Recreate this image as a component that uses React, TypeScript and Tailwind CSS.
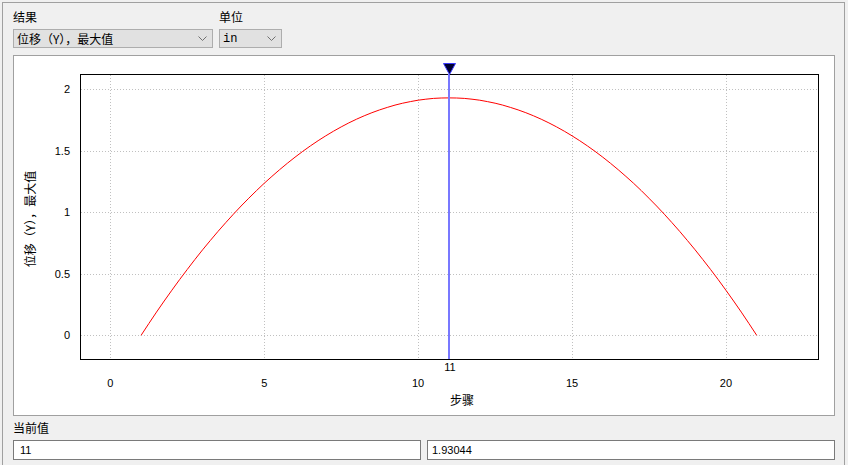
import React from 'react';

const X0 = 110.3;
const XS = 30.78;
const Y0 = 335.3;
const YS = 123;

const px = (v: number) => X0 + v * XS;
const py = (v: number) => Y0 - v * YS;
const snap = (n: number) => Math.round(n) + 0.5;

const PEAK = 1.93044;

const curvePoints = (() => {
  const pts: string[] = [];
  for (let s = 1; s <= 21.0001; s += 0.25) {
    const t = (s - 11) / 10;
    const v = PEAK * (1 - t * t);
    pts.push(`${px(s).toFixed(1)},${py(v).toFixed(1)}`);
  }
  return pts.join(' ');
})();

const Chevron = () => (
  <svg width="9" height="6" viewBox="0 0 9 6" className="shrink-0">
    <polyline points="0.5,0.5 4.5,4.5 8.5,0.5" fill="none" stroke="#707070" strokeWidth="1" />
  </svg>
);

const Dropdown: React.FC<{ value: string; width: string; mono?: boolean }> = ({ value, width, mono }) => (
  <div
    className={`flex h-[19px] items-center justify-between border border-[#adadad] bg-[#e1e1e1] pl-[3px] pr-[5px] text-[12px] leading-none text-black ${width}`}
  >
    <span className={mono ? "font-['Liberation_Mono','Noto_Sans_CJK_SC',monospace]" : ''}>{value}</span>
    <Chevron />
  </div>
);

const Chart = () => {
  const xTicks = [0, 5, 10, 15, 20];
  const yTicks = [
    { v: 0, l: '0' },
    { v: 0.5, l: '0.5' },
    { v: 1, l: '1' },
    { v: 1.5, l: '1.5' },
    { v: 2, l: '2' },
  ];
  return (
    <svg width="820" height="359" viewBox="14 56 820 359" className="block">
      {xTicks.map((t) => (
        <line
          key={`gx${t}`}
          x1={snap(px(t))}
          x2={snap(px(t))}
          y1={75}
          y2={359}
          stroke="#c0c0c0"
          strokeDasharray="1 2"
        />
      ))}
      {yTicks.map((t) => (
        <line
          key={`gy${t.v}`}
          x1={81}
          x2={818}
          y1={snap(py(t.v))}
          y2={snap(py(t.v))}
          stroke="#c0c0c0"
          strokeDasharray="1 2"
        />
      ))}
      <rect x="80.5" y="74.5" width="738" height="285" fill="none" stroke="#000" strokeWidth="1" />
      <polyline points={curvePoints} fill="none" stroke="#ff0000" strokeWidth="1" />
      <line x1={449} x2={449} y1={74} y2={359} stroke="#7878ff" strokeWidth="2" />
      <polygon points="443.5,63.5 455.5,63.5 449.5,74.5" fill="#000030" stroke="#3a3aff" strokeWidth="1" />
      {yTicks.map((t) => (
        <text
          key={`ly${t.v}`}
          x={70}
          y={py(t.v) + 4}
          textAnchor="end"
          fontSize="11"
          fontFamily="'Liberation Sans', sans-serif"
          fill="#000"
        >
          {t.l}
        </text>
      ))}
      {xTicks.map((t) => (
        <text
          key={`lx${t}`}
          x={px(t)}
          y={387}
          textAnchor="middle"
          fontSize="11"
          fontFamily="'Liberation Sans', sans-serif"
          fill="#000"
        >
          {t}
        </text>
      ))}
      <text x={450} y={371} textAnchor="middle" fontSize="11" fontFamily="'Liberation Sans', sans-serif" fill="#000">
        11
      </text>
      <text x={462} y={405} textAnchor="middle" fontSize="12" fontFamily="'Noto Sans CJK SC', sans-serif" fill="#000">
        步骤
      </text>
      <text
        x={0}
        y={0}
        transform="translate(35 219) rotate(-90)"
        textAnchor="middle"
        fontSize="12"
        fontFamily="'Noto Sans CJK SC', sans-serif"
        fill="#000"
      >
        位移（Y），最大值
      </text>
    </svg>
  );
};

export default function App() {
  return (
    <div className="h-[465px] w-[848px] overflow-hidden bg-[#f0f0f0] pl-[2px] pt-[2px] font-['Noto_Sans_CJK_SC',sans-serif] text-black">
      <div className="h-[470px] w-[843px] border-l border-r border-t border-[#a0a0a0] pl-[10px] pr-[9px] pt-[6px]">
        <div className="flex gap-[6px]">
          <div className="flex w-[200px] flex-col gap-[4px]">
            <span className="h-[16px] text-[12px] leading-[16px]">结果</span>
            <Dropdown value="位移（Y），最大值" width="w-[200px]" />
          </div>
          <div className="flex w-[63px] flex-col gap-[4px]">
            <span className="h-[16px] text-[12px] leading-[16px]">单位</span>
            <Dropdown value="in" width="w-[63px]" mono />
          </div>
        </div>
        <div className="mt-[7px] h-[361px] w-[822px] border border-[#a0a0a0] bg-white">
          <Chart />
        </div>
        <div className="mt-[4px] h-[16px] text-[12px] leading-[16px]">当前值</div>
        <div className="mt-[4px] flex gap-[6px]">
          <div className="flex h-[20px] w-[408px] items-center border border-[#7a7a7a] bg-white pl-[6px] font-['Liberation_Sans',sans-serif] text-[11px]">
            11
          </div>
          <div className="flex h-[20px] w-[408px] items-center border border-[#7a7a7a] bg-white pl-[4px] font-['Liberation_Sans',sans-serif] text-[11px]">
            1.93044
          </div>
        </div>
      </div>
    </div>
  );
}
